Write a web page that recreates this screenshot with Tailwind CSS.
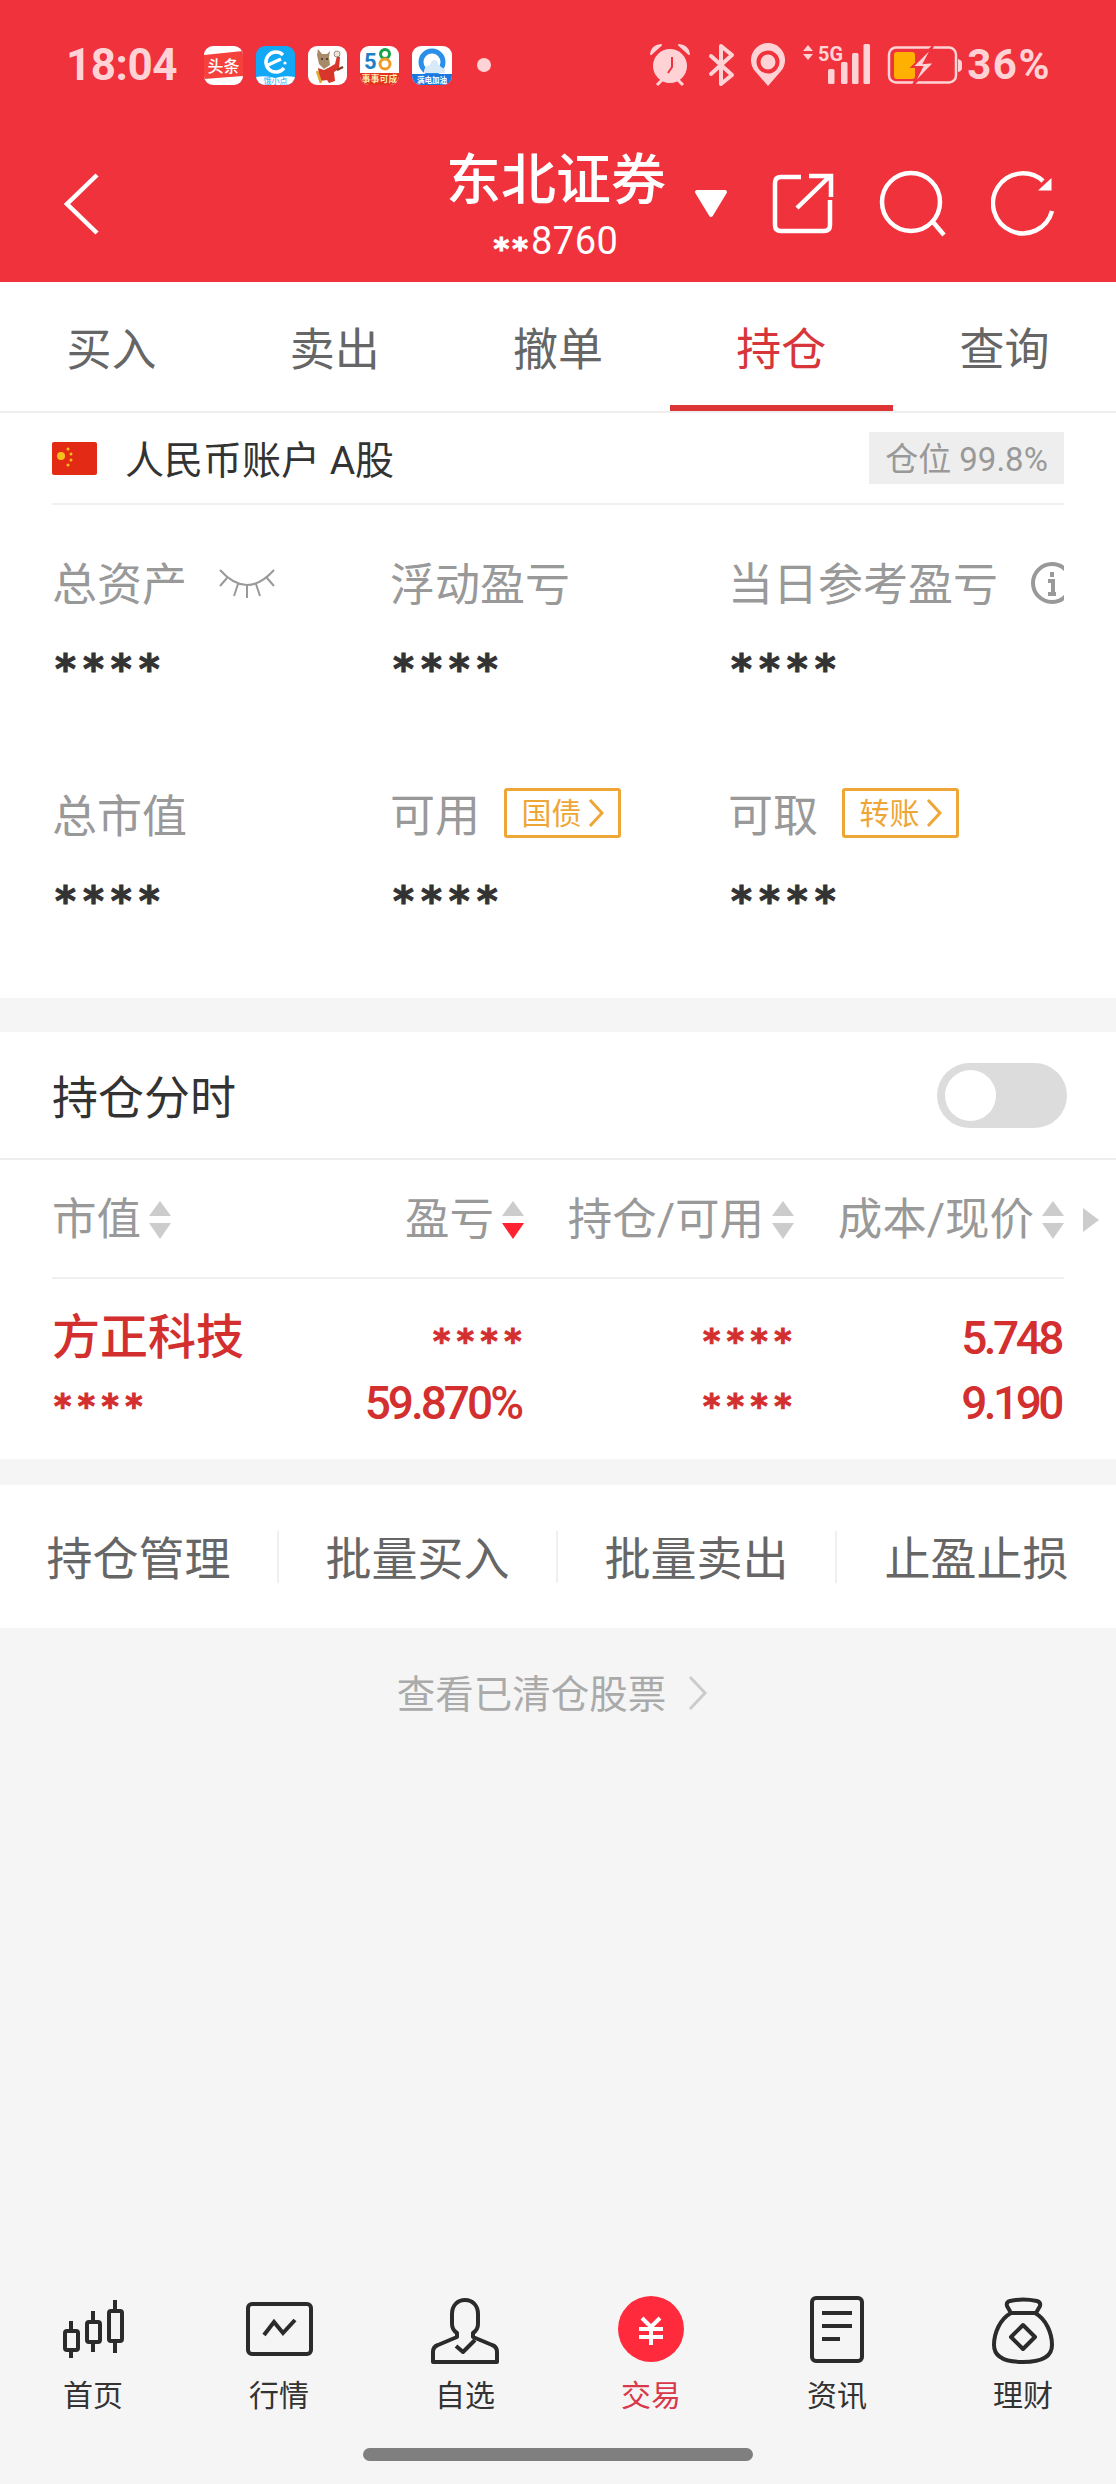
<!DOCTYPE html>
<html lang="zh-CN">

<head>
    <meta charset="UTF-8" />
    <meta name="viewport" content="width=device-width, initial-scale=1.0" />
    <title>持仓</title>
    <script src="https://cdn.jsdelivr.net/npm/@tailwindcss/browser@4"></script>
</head>

<body class="w-[1116px] h-[2484px] flex flex-col bg-[#f5f5f5] overflow-hidden font-['Roboto','Noto_Sans_CJK_SC',sans-serif]">

    <!-- Red header -->
    <header class="h-[282px] shrink-0 bg-[#f0323c]">
        <!-- Status bar -->
        <div class="h-[130px] flex items-center pl-[66px] pr-[65px] text-[#ffd3d6]">
            <span class="text-[44px] leading-[50px] font-bold w-[110px] tracking-[-0.5px]">18:04</span>
            <div class="flex gap-[13px] ml-[28px]">
                <svg class="w-[39px] h-[39px] rounded-[9px] bg-white" viewBox="0 0 39 39">
                    <polygon points="0,9 39,5 39,30 0,33" fill="#f5403c" />
                    <text x="19.5" y="26" text-anchor="middle" font-size="16" font-weight="500" fill="#fff" font-family="Noto Sans CJK SC">头条</text>
                </svg>
                <svg class="w-[39px] h-[39px] rounded-[9px] bg-[#12a8f6]" viewBox="0 0 39 39">
                    <path d="M0 31 q10 -2 19 1 q10 -3 20 -1 v8 h-39z" fill="#fff" />
                    <path d="M27 9 a10 10 0 1 0 1 13 M12 19 l13 -6" fill="none" stroke="#fff" stroke-width="3.5" />
                    <circle cx="29" cy="17" r="1.6" fill="#fff" />
                    <text x="19.5" y="38" text-anchor="middle" font-size="8" fill="#12a8f6" font-family="Noto Sans CJK SC">饿小点</text>
                </svg>
                <svg class="w-[39px] h-[39px] rounded-[9px] bg-white" viewBox="0 0 39 39">
                    <path d="M10 3 l4 5 h5 l3 -3 l-1 6 l1 8 l-6 4 l-5 -5 l-2 -9z" fill="#a98a68" />
                    <circle cx="14" cy="13" r="1" fill="#333" />
                    <circle cx="19" cy="13" r="1" fill="#333" />
                    <path d="M10 22 l6 2 l6 -3 l5 -3 l2 -8 l3 1 l-1 12 l-5 3 l1 9 l-6 2 l-2 -3 l-7 1 z" fill="#d8362a" />
                    <circle cx="29" cy="8" r="3" fill="#f3e3d3" stroke="#555" stroke-width="0.6" />
                    <path d="M9 25 L13 37" stroke="#e0a92e" stroke-width="2.5" />
                    <path d="M29 24 l6 -3" stroke="#8a3a1e" stroke-width="2.5" />
                </svg>
                <svg class="w-[39px] h-[39px] rounded-[9px] bg-white" viewBox="0 0 39 39">
                    <text x="4" y="23" font-size="22" font-weight="700" fill="#1c7fc7" font-family="Roboto">5</text>
                    <circle cx="25" cy="8" r="4.5" fill="none" stroke="#17a34a" stroke-width="3" />
                    <circle cx="25" cy="18" r="5" fill="none" stroke="#ef9b27" stroke-width="3" />
                    <path d="M0 27 h39 v12 h-39z" fill="#e2331f" />
                    <text x="19.5" y="36" text-anchor="middle" font-size="9" font-weight="700" fill="#ffe9b0" font-family="Noto Sans CJK SC">事事可成</text>
                </svg>
                <svg class="w-[40px] h-[39px] rounded-[9px] bg-white" viewBox="0 0 40 39">
                    <circle cx="20" cy="16" r="11" fill="none" stroke="#2a8fe8" stroke-width="5" />
                    <path d="M12 25 q1 -6 6 -6 q2 -7 7 -4 q2 6 8 8 v4 h-21z" fill="#d8e9f7" />
                    <path d="M0 28 h40 v11 h-40z" fill="#1b78e0" />
                    <text x="20" y="36.5" text-anchor="middle" font-size="7.5" font-weight="700" fill="#fff" font-family="Noto Sans CJK SC">满电加油</text>
                </svg>
            </div>
            <span class="w-[14px] h-[14px] rounded-full bg-[#ffd3d6] ml-[25px]"></span>

            <svg class="w-[320px] h-[50px] ml-auto" viewBox="645 40 320 50">
                <!-- alarm -->
                <path d="M650 54 q1 -8 10 -9 z M688 54 q-1 -8 -10 -9 z" fill="#ffd3d6" stroke="#ffd3d6" stroke-width="2" stroke-linejoin="round" />
                <circle cx="669" cy="66" r="17" fill="#ffd3d6" />
                <path d="M671 57 v10 l-4 6" fill="none" stroke="#f0323c" stroke-width="2" />
                <path d="M656 85 l5 -5 M682 85 l-5 -5" stroke="#ffd3d6" stroke-width="3" />
                <!-- bluetooth -->
                <path d="M710 56 l21 19 l-11 9 v-38 l11 9 l-21 19" fill="none" stroke="#ffd3d6" stroke-width="4" stroke-linejoin="round" stroke-linecap="round" />
                <!-- location -->
                <path d="M767 86 l-13 -15 a17 17 0 1 1 26 0 z" fill="#ffd3d6" />
                <circle cx="767" cy="62" r="9.5" fill="none" stroke="#f0323c" stroke-width="4" />
                <!-- data arrows, 5G, signal -->
                <path d="M807 45 l5 6 h-10z M807 60 l5 -6 h-10z" fill="#ffd3d6" />
                <text x="817" y="61" font-size="21" font-weight="700" textLength="25" lengthAdjust="spacingAndGlyphs" fill="#ffd3d6" font-family="Roboto">5G</text>
                <rect x="827" y="69" width="6.5" height="15" rx="1.5" fill="#ffd3d6" />
                <rect x="840" y="62" width="6.5" height="22" rx="1.5" fill="#ffd3d6" />
                <rect x="851" y="53" width="6.5" height="31" rx="1.5" fill="#ffd3d6" />
                <rect x="862.5" y="44" width="6.5" height="40" rx="1.5" fill="#ffd3d6" />
                <!-- battery -->
                <rect x="888" y="47.5" width="67" height="35" rx="7" fill="none" stroke="#ffd3d6" stroke-width="2.5" />
                <path d="M957 59 q4 1 4 4 v5 q0 3 -4 4z" fill="#ffd3d6" />
                <rect x="893" y="52" width="21" height="27" rx="3" fill="#ffb000" />
                <polygon points="932,46 911,67 921,67 912,85 934,62 923,63" fill="#ffd3d6" stroke="#f0323c" stroke-width="2" />
            </svg>
            <span class="text-[42px] leading-[50px] font-bold tracking-[1.5px] ml-[1px]">36%</span>
        </div>

        <!-- Title row -->
        <div class="h-[152px] flex items-start pl-[64px]">
            <svg class="w-[36px] h-[64px] mt-[42px]" viewBox="64 172 36 64">
                <path d="M97 175 L67 204 L97 233" fill="none" stroke="#fff" stroke-width="4.5" />
            </svg>
            <div class="w-[224px] ml-[344px] flex flex-col items-center text-white">
                <div class="h-[60px] mt-[20px] text-[55px] leading-[60px] font-medium whitespace-nowrap">东北证券</div>
                <div class="h-[34px] mt-[14px] text-[38px] leading-[34px] whitespace-nowrap tracking-[0.5px]"><span class="font-['DejaVu_Sans'] text-[30px] font-bold tracking-[3px] align-[-5px] [-webkit-text-stroke:1px_#ffffff]">**</span>8760</div>
            </div>
            <svg class="w-[36px] h-[30px] ml-[25px] mt-[59px]" viewBox="692 189 36 30">
                <path d="M696 192 h28 l-14 23z" fill="#fff" stroke="#fff" stroke-width="4" stroke-linejoin="round" />
            </svg>
            <svg class="w-[64px] h-[68px] ml-[42px] mt-[40px]" viewBox="772 170 64 68">
                <path d="M802 177 H782 q-6 0 -6 6 V225 q0 6 6 6 H825 q6 0 6 -6 V200" fill="none" stroke="#fff" stroke-width="4.5" />
                <path d="M798 208 L830 177 M810 176 H832 V197" fill="none" stroke="#fff" stroke-width="4.5" />
            </svg>
            <svg class="w-[68px] h-[68px] ml-[44px] mt-[40px]" viewBox="880 170 68 68">
                <circle cx="912" cy="202" r="29" fill="none" stroke="#fff" stroke-width="4.5" />
                <path d="M934 222 L945 235" stroke="#fff" stroke-width="4.5" />
            </svg>
            <svg class="w-[66px] h-[68px] ml-[44px] mt-[40px]" viewBox="992 170 66 68">
                <path d="M1053 211 A30 30 0 1 1 1044 181" fill="none" stroke="#fff" stroke-width="4.5" />
                <polygon points="1039,190.5 1052.5,190.5 1052.5,178" fill="#fff" />
            </svg>
        </div>
    </header>

    <!-- Tabs -->
    <nav class="h-[131px] shrink-0 grid grid-cols-5 bg-white border-b-2 border-[#eeeeee] text-[45px] text-[#666666] font-['Noto_Sans_CJK_SC',sans-serif]">
        <a class="flex items-center justify-center">买入</a>
        <a class="flex items-center justify-center">卖出</a>
        <a class="flex items-center justify-center">撤单</a>
        <a class="flex items-center justify-center pt-[6px] text-[#d8353a] border-b-[6px] border-[#dc3434]">持仓</a>
        <a class="flex items-center justify-center">查询</a>
    </nav>

    <!-- Account + assets -->
    <section class="shrink-0 h-[585px] bg-white">
        <div class="mx-[52px] h-[92px] flex items-center border-b-2 border-[#f0f0f0]">
            <svg class="w-[45px] h-[33px] rounded-[2px]" viewBox="0 0 45 33">
                <rect width="45" height="33" fill="#e32a15" />
                <circle cx="9" cy="14" r="4" fill="#f6c11d" />
                <circle cx="16" cy="7" r="1.5" fill="#f6c11d" />
                <circle cx="19" cy="12" r="1.5" fill="#f6c11d" />
                <circle cx="19" cy="18" r="1.5" fill="#f6c11d" />
                <circle cx="16" cy="23" r="1.5" fill="#f6c11d" />
            </svg>
            <span class="ml-[28px] pt-[6px] text-[39px] leading-[50px] text-[#333333] whitespace-nowrap">人民币账户 A股</span>
            <span class="ml-auto pt-[4px] w-[195px] h-[52px] flex items-center justify-center gap-[8px] bg-[#eeeeee] text-[33px] text-[#999999] whitespace-nowrap">仓位 99.8%</span>
        </div>

        <div class="grid grid-cols-[338px_338px_336px] gap-y-[102px] mx-[52px] pt-[48px] text-[45px] text-[#999999]">
            <div>
                <div class="h-[60px] flex items-center">
                    <span class="pt-[6px]">总资产</span>
                    <svg class="w-[60px] h-[34px] ml-[30px]" viewBox="216 566 60 34">
                        <path d="M219 570 Q246 600 273 570 M226 578 L219 586 M237 584 L233 596 M246 586 V598 M255 584 L259 596 M266 578 L273 586" fill="none" stroke="#999999" stroke-width="2" />
                    </svg>
                </div>
                <div class="h-[40px] mt-[30px] pl-[3px] flex items-center text-[#333333] font-['DejaVu_Sans'] font-bold text-[40px] leading-[40px] tracking-[7px] [-webkit-text-stroke:1px_#333333]"><span class="pt-[11px]">****</span></div>
            </div>
            <div>
                <div class="h-[60px] pt-[6px] flex items-center">浮动盈亏</div>
                <div class="h-[40px] mt-[30px] pl-[3px] flex items-center text-[#333333] font-['DejaVu_Sans'] font-bold text-[40px] leading-[40px] tracking-[7px] [-webkit-text-stroke:1px_#333333]"><span class="pt-[11px]">****</span></div>
            </div>
            <div>
                <div class="h-[60px] flex items-center overflow-hidden">
                    <span class="shrink-0 pt-[6px]">当日参考盈亏</span>
                    <svg class="w-[44px] h-[44px] shrink-0 ml-[32px]" viewBox="0 0 44 44">
                        <circle cx="22" cy="22" r="19" fill="none" stroke="#999999" stroke-width="4" />
                        <path d="M22 11 v5 M18 20 h5 v13 M18 33 h8" fill="none" stroke="#999999" stroke-width="4" />
                    </svg>
                </div>
                <div class="h-[40px] mt-[30px] pl-[3px] flex items-center text-[#333333] font-['DejaVu_Sans'] font-bold text-[40px] leading-[40px] tracking-[7px] [-webkit-text-stroke:1px_#333333]"><span class="pt-[11px]">****</span></div>
            </div>
            <div>
                <div class="h-[60px] pt-[6px] flex items-center">总市值</div>
                <div class="h-[40px] mt-[30px] pl-[3px] flex items-center text-[#333333] font-['DejaVu_Sans'] font-bold text-[40px] leading-[40px] tracking-[7px] [-webkit-text-stroke:1px_#333333]"><span class="pt-[11px]">****</span></div>
            </div>
            <div>
                <div class="h-[60px] flex items-center">
                    <span class="pt-[4px]">可用</span>
                    <span class="ml-[24px] mb-[4px] w-[117px] h-[50px] flex items-center justify-center gap-[6px] border-[3px] border-[#eea636] rounded-[3px] text-[30px] text-[#eea636]">国债
                        <svg class="w-[16px] h-[30px]" viewBox="0 0 16 30"><path d="M2 2 L14 15 L2 28" fill="none" stroke="#eea636" stroke-width="3" /></svg>
                    </span>
                </div>
                <div class="h-[40px] mt-[30px] pl-[3px] flex items-center text-[#333333] font-['DejaVu_Sans'] font-bold text-[40px] leading-[40px] tracking-[7px] [-webkit-text-stroke:1px_#333333]"><span class="pt-[11px]">****</span></div>
            </div>
            <div>
                <div class="h-[60px] flex items-center">
                    <span class="pt-[4px]">可取</span>
                    <span class="ml-[24px] mb-[4px] w-[117px] h-[50px] flex items-center justify-center gap-[6px] border-[3px] border-[#eea636] rounded-[3px] text-[30px] text-[#eea636]">转账
                        <svg class="w-[16px] h-[30px]" viewBox="0 0 16 30"><path d="M2 2 L14 15 L2 28" fill="none" stroke="#eea636" stroke-width="3" /></svg>
                    </span>
                </div>
                <div class="h-[40px] mt-[30px] pl-[3px] flex items-center text-[#333333] font-['DejaVu_Sans'] font-bold text-[40px] leading-[40px] tracking-[7px] [-webkit-text-stroke:1px_#333333]"><span class="pt-[11px]">****</span></div>
            </div>
        </div>
    </section>

    <!-- Holdings -->
    <section class="shrink-0 mt-[34px] bg-white h-[427px]">
        <div class="h-[128px] flex items-center justify-between pl-[52px] pr-[49px] border-b-2 border-[#eeeeee]">
            <span class="text-[46px] text-[#333333] pt-[6px]">持仓分时</span>
            <span class="w-[130px] h-[65px] rounded-full bg-[#dcdcdc] flex items-center pl-[8px]">
                <span class="w-[51px] h-[51px] rounded-full bg-white"></span>
            </span>
        </div>

        <div class="h-[117px] pt-[3px] grid grid-cols-[202px_270px_270px_270px_35px] items-center pl-[52px] text-[44.5px] text-[#999999] whitespace-nowrap">
            <div class="flex items-center gap-[8px]">市值
                <svg class="w-[22px] h-[40px]" viewBox="0 0 22 40"><path d="M11 1 L22 16 H0z" fill="#cccccc" /><path d="M11 39 L22 23 H0z" fill="#cccccc" /></svg>
            </div>
            <div class="flex items-center justify-end gap-[8px]">盈亏
                <svg class="w-[22px] h-[40px]" viewBox="0 0 22 40"><path d="M11 1 L22 16 H0z" fill="#cccccc" /><path d="M11 39 L22 23 H0z" fill="#ff2233" /></svg>
            </div>
            <div class="flex items-center justify-end gap-[8px]">持仓/可用
                <svg class="w-[22px] h-[40px]" viewBox="0 0 22 40"><path d="M11 1 L22 16 H0z" fill="#cccccc" /><path d="M11 39 L22 23 H0z" fill="#cccccc" /></svg>
            </div>
            <div class="flex items-center justify-end gap-[8px]">成本/现价
                <svg class="w-[22px] h-[40px]" viewBox="0 0 22 40"><path d="M11 1 L22 16 H0z" fill="#cccccc" /><path d="M11 39 L22 23 H0z" fill="#cccccc" /></svg>
            </div>
            <div class="flex justify-end">
                <svg class="w-[16px] h-[24px]" viewBox="0 0 16 24"><path d="M0 0 L16 12 L0 24z" fill="#cccccc" /></svg>
            </div>
        </div>
        <div class="mx-[52px] border-b-2 border-[#f0f0f0]"></div>

        <div class="pt-[34px] grid grid-cols-[202px_270px_270px_270px] gap-y-[15px] pl-[52px] text-[#d32f2f]">
            <div class="h-[50px] flex items-center text-[48px] font-medium whitespace-nowrap">方正科技</div>
            <div class="h-[50px] flex items-center justify-end font-['DejaVu_Sans'] font-bold text-[33px] tracking-[6.5px] [-webkit-text-stroke:1px_#d32f2f]"><span class="pt-[8px] mr-[-4px]">****</span></div>
            <div class="h-[50px] flex items-center justify-end font-['DejaVu_Sans'] font-bold text-[33px] tracking-[6.5px] [-webkit-text-stroke:1px_#d32f2f]"><span class="pt-[8px] mr-[-4px]">****</span></div>
            <div class="h-[50px] flex items-center justify-end text-[46px] font-medium tracking-[-3.5px]"><span class="mr-[3px]">5.748</span></div>
            <div class="h-[50px] flex items-center font-['DejaVu_Sans'] font-bold text-[33px] tracking-[6.5px] [-webkit-text-stroke:1px_#d32f2f]"><span class="pt-[8px] ml-[2px]">****</span></div>
            <div class="h-[50px] flex items-center justify-end text-[46px] font-medium tracking-[-3px]"><span class="mr-[3px]">59.870%</span></div>
            <div class="h-[50px] flex items-center justify-end font-['DejaVu_Sans'] font-bold text-[33px] tracking-[6.5px] [-webkit-text-stroke:1px_#d32f2f]"><span class="pt-[8px] mr-[-4px]">****</span></div>
            <div class="h-[50px] flex items-center justify-end text-[46px] font-medium tracking-[-3.5px]"><span class="mr-[3px]">9.190</span></div>
        </div>
    </section>

    <!-- Actions -->
    <section class="shrink-0 mt-[26px] h-[143px] bg-white grid grid-cols-4 items-center text-[46px] text-[#666666] whitespace-nowrap">
        <div class="h-[52px] flex items-center justify-center border-r-2 border-[#f0f0f0]"><span class="pt-[6px]">持仓管理</span></div>
        <div class="h-[52px] flex items-center justify-center border-r-2 border-[#f0f0f0]"><span class="pt-[6px]">批量买入</span></div>
        <div class="h-[52px] flex items-center justify-center border-r-2 border-[#f0f0f0]"><span class="pt-[6px]">批量卖出</span></div>
        <div class="h-[52px] flex items-center justify-center"><span class="pt-[6px]">止盈止损</span></div>
    </section>

    <div class="flex-1">
        <div class="mt-[35px] h-[60px] pr-[11px] flex items-center justify-center text-[38.5px] text-[#aaaaaa]"><span class="pt-[4px]">查看已清仓股票</span>
            <svg class="w-[20px] h-[36px] ml-[22px]" viewBox="0 0 20 36"><path d="M2 2 L17 18 L2 34" fill="none" stroke="#cccccc" stroke-width="3" /></svg>
        </div>
    </div>

    <!-- Bottom nav -->
    <footer class="shrink-0 pt-[14px] pb-[23px]">
        <div class="grid grid-cols-6 text-[30px] text-[#333333]">
            <div class="flex flex-col items-center">
                <svg class="w-[70px] h-[70px]" viewBox="58 2295 70 70" fill="none" stroke="#2b2b2b" stroke-width="4">
                    <rect x="65" y="2331" width="13" height="19" rx="2" />
                    <path d="M71 2321 V2331 M71 2350 V2358" />
                    <rect x="87" y="2322" width="13" height="20" rx="2" />
                    <path d="M93 2311 V2322 M93 2342 V2352" />
                    <rect x="109" y="2311" width="13" height="30" rx="2" />
                    <path d="M115 2300 V2311 M115 2341 V2353" />
                </svg>
                <span class="mt-[11px] h-[40px] leading-[40px]">首页</span>
            </div>
            <div class="flex flex-col items-center">
                <svg class="w-[70px] h-[70px]" viewBox="244 2295 70 70" fill="none" stroke="#2b2b2b" stroke-width="4">
                    <rect x="248" y="2304" width="63" height="50" rx="4" />
                    <path d="M264 2335 L274 2322 L283 2333 L295 2320" />
                </svg>
                <span class="mt-[11px] h-[40px] leading-[40px]">行情</span>
            </div>
            <div class="flex flex-col items-center">
                <svg class="w-[70px] h-[70px]" viewBox="430 2295 70 70" fill="none" stroke="#2b2b2b" stroke-width="4" stroke-linejoin="round">
                    <path d="M465 2300 c-8 0 -13 6 -13 14 v10 c0 4 2 7 5 9 v4 l-19 8 c-3 1 -5 4 -5 7 v10 h64 v-10 c0 -3 -2 -6 -5 -7 l-19 -8 v-4 c3 -2 5 -5 5 -9 v-10 c0 -8 -5 -14 -13 -14 z" />
                    <path d="M456 2346 L463 2352 L475 2340" />
                </svg>
                <span class="mt-[11px] h-[40px] leading-[40px]">自选</span>
            </div>
            <div class="flex flex-col items-center">
                <svg class="w-[70px] h-[70px]" viewBox="616 2295 70 70">
                    <circle cx="651" cy="2329" r="33" fill="#ff2a3c" />
                    <path d="M642 2318 L651 2327 L660 2318 M639 2329 H663 M639 2337 H663 M651 2327 V2345" fill="none" stroke="#fff" stroke-width="4" />
                </svg>
                <span class="mt-[11px] h-[40px] leading-[40px] text-[#d9374a]">交易</span>
            </div>
            <div class="flex flex-col items-center">
                <svg class="w-[70px] h-[70px]" viewBox="802 2295 70 70" fill="none" stroke="#2b2b2b" stroke-width="4">
                    <rect x="812" y="2298" width="50" height="63" rx="4" />
                    <path d="M822 2313 H852 M822 2326 H852 M822 2339 H840" />
                </svg>
                <span class="mt-[11px] h-[40px] leading-[40px]">资讯</span>
            </div>
            <div class="flex flex-col items-center">
                <svg class="w-[70px] h-[70px]" viewBox="988 2295 70 70" fill="none" stroke="#2b2b2b" stroke-width="4" stroke-linejoin="round">
                    <path d="M1010 2301 q13 -3 27 0 q4 1 3 5 l-4 7 h-25 l-4 -7 q-1 -4 3 -5z" />
                    <path d="M1011 2313 C1000 2319 994 2333 994 2345 C994 2358 1006 2362 1023 2362 C1040 2362 1052 2358 1052 2345 C1052 2333 1046 2319 1035 2313" />
                    <path d="M1023 2325 L1035 2337 L1023 2349 L1011 2337z" />
                </svg>
                <span class="mt-[11px] h-[40px] leading-[40px]">理财</span>
            </div>
        </div>
        <div class="mt-[32px] mx-auto w-[390px] h-[13px] rounded-full bg-[#7f7f7f]"></div>
    </footer>
</body>

</html>
